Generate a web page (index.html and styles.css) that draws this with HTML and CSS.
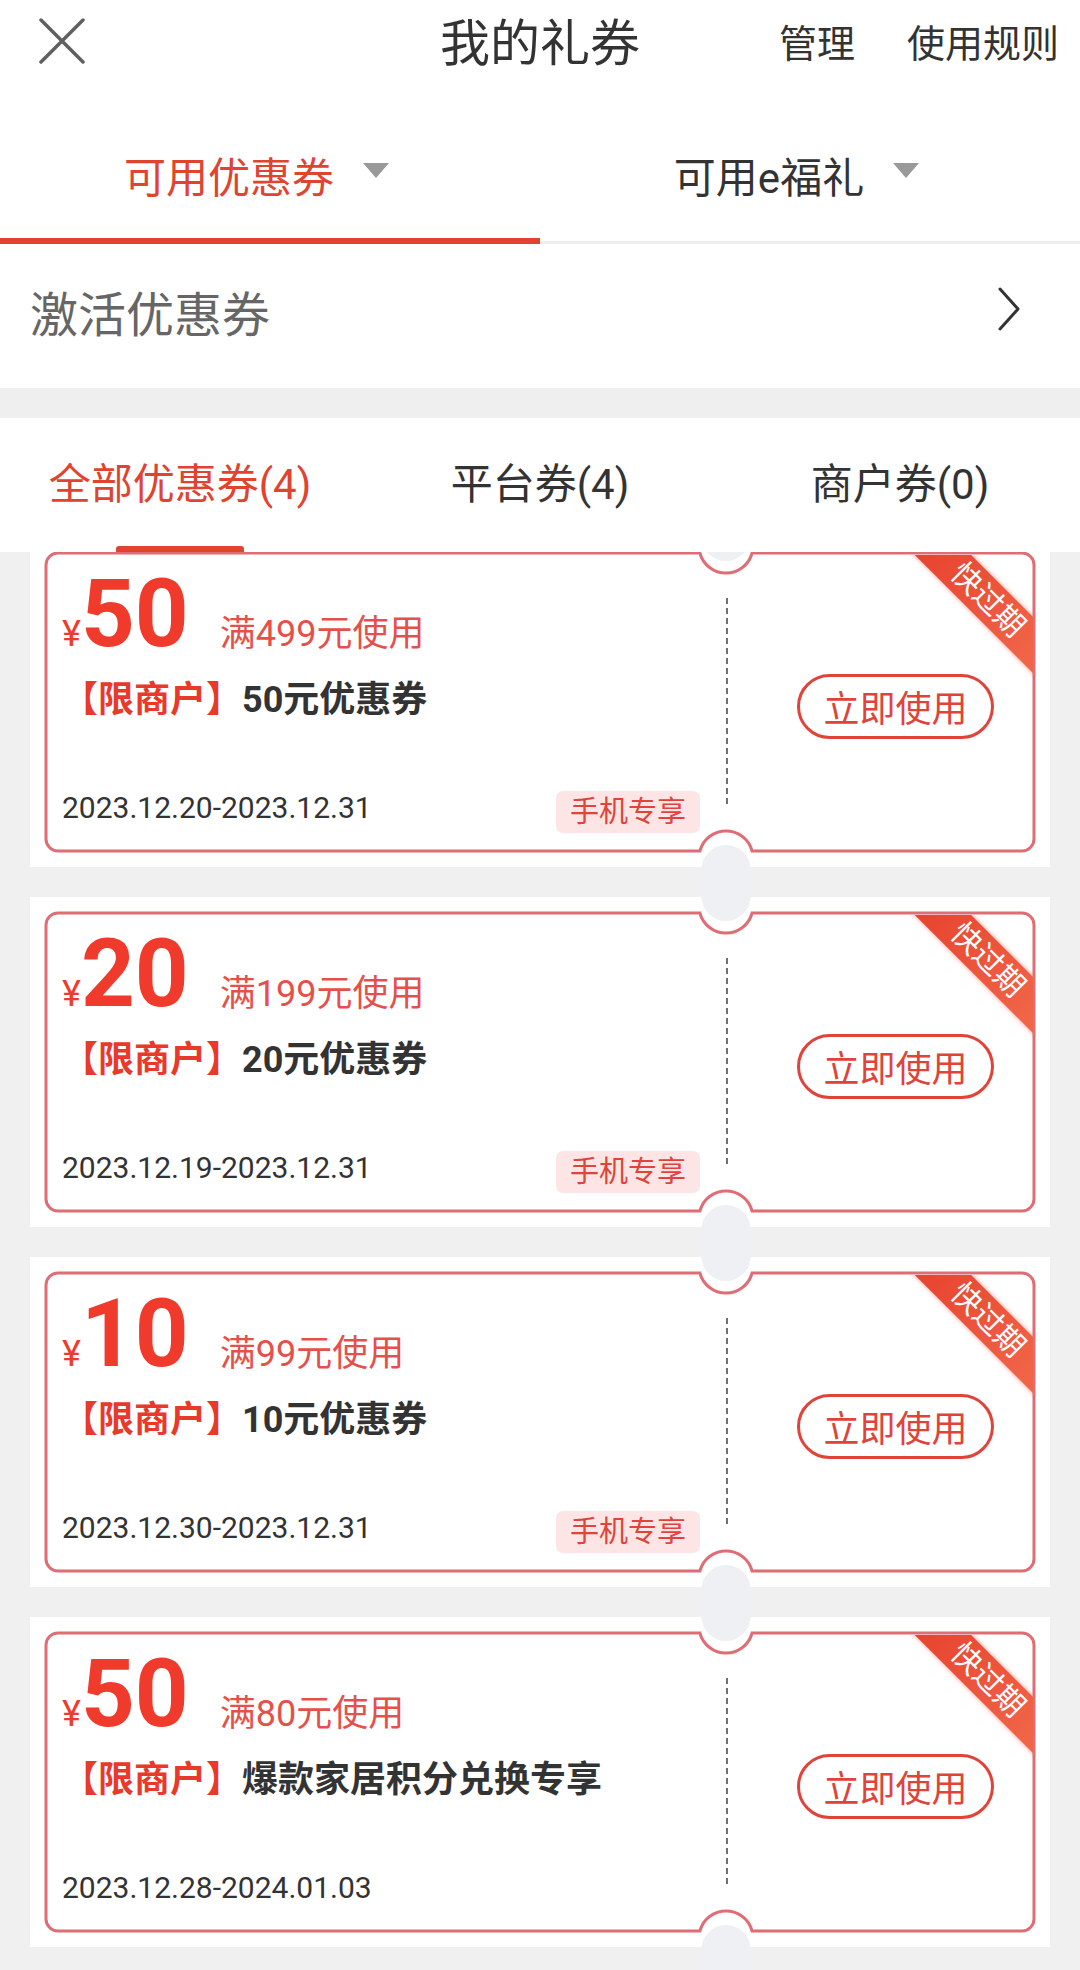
FILE: index.html
```html
<!DOCTYPE html>
<html lang="zh-CN">
<head>
<meta charset="utf-8">
<title>我的礼券</title>
<link rel="stylesheet" href="styles.css">
</head>
<body>
<div class="page">
  <header class="topbar">
    <div class="close">
      <svg width="46" height="46" viewBox="0 0 46 46"><path d="M2 2 L44 44 M44 2 L2 44" stroke="#606060" stroke-width="3.5" stroke-linecap="round" fill="none"/></svg>
    </div>
    <div class="title">我的礼券</div>
    <div class="actions"><span>管理</span><span>使用规则</span></div>
  </header>

  <nav class="tabs">
    <div class="tab active"><span>可用优惠券</span><i class="caret"></i></div>
    <div class="tab"><span>可用e福礼</span><i class="caret"></i></div>
  </nav>

  <div class="activate">
    <span>激活优惠券</span>
    <svg class="chev" width="22" height="44" viewBox="0 0 22 44"><path d="M2 2 L20 22 L2 42" stroke="#333" stroke-width="3" fill="none" stroke-linecap="round" stroke-linejoin="round"/></svg>
  </div>

  <div class="band"></div>

  <nav class="subtabs">
    <div class="subtab active">全部优惠券(4)</div>
    <div class="subtab">平台券(4)</div>
    <div class="subtab">商户券(0)</div>
  </nav>

  <div class="list">
    <div class="coupon">
      <svg class="shape" width="1020" height="330" viewBox="0 0 1020 330">
        <rect x="671.5" y="-60" width="49" height="84" rx="24.5" fill="#eef0f3"/>
        <rect x="671.5" y="308" width="49" height="84" rx="24.5" fill="#eef0f3"/>
        <path d="M28 16 H669.9 A27 27 0 0 0 722.1 16 H992 A12 12 0 0 1 1004 28 V302 A12 12 0 0 1 992 314 H722.1 A27 27 0 0 0 669.9 314 H28 A12 12 0 0 1 16 302 V28 A12 12 0 0 1 28 16 Z" fill="#fff" stroke="#de6d75" stroke-width="3"/>
      </svg>
      <div class="card">
        <div class="card-left">
          <div class="amount"><span class="yen">¥</span><span class="num">50</span><span class="cond">满499元使用</span></div>
          <div class="name"><span class="limit">【限商户】</span>50元优惠券</div>
          <div class="foot"><span class="date">2023.12.20-2023.12.31</span><span class="tag">手机专享</span></div>
        </div>
        <div class="divider"></div>
        <div class="card-right"><div class="use">立即使用</div></div>
        <div class="ribbon"><div class="ribbon-band">快过期</div></div>
      </div>
    </div>

    <div class="coupon">
      <svg class="shape" width="1020" height="330" viewBox="0 0 1020 330">
        <rect x="671.5" y="-60" width="49" height="84" rx="24.5" fill="#eef0f3"/>
        <rect x="671.5" y="308" width="49" height="84" rx="24.5" fill="#eef0f3"/>
        <path d="M28 16 H669.9 A27 27 0 0 0 722.1 16 H992 A12 12 0 0 1 1004 28 V302 A12 12 0 0 1 992 314 H722.1 A27 27 0 0 0 669.9 314 H28 A12 12 0 0 1 16 302 V28 A12 12 0 0 1 28 16 Z" fill="#fff" stroke="#de6d75" stroke-width="3"/>
      </svg>
      <div class="card">
        <div class="card-left">
          <div class="amount"><span class="yen">¥</span><span class="num">20</span><span class="cond">满199元使用</span></div>
          <div class="name"><span class="limit">【限商户】</span>20元优惠券</div>
          <div class="foot"><span class="date">2023.12.19-2023.12.31</span><span class="tag">手机专享</span></div>
        </div>
        <div class="divider"></div>
        <div class="card-right"><div class="use">立即使用</div></div>
        <div class="ribbon"><div class="ribbon-band">快过期</div></div>
      </div>
    </div>

    <div class="coupon">
      <svg class="shape" width="1020" height="330" viewBox="0 0 1020 330">
        <rect x="671.5" y="-60" width="49" height="84" rx="24.5" fill="#eef0f3"/>
        <rect x="671.5" y="308" width="49" height="84" rx="24.5" fill="#eef0f3"/>
        <path d="M28 16 H669.9 A27 27 0 0 0 722.1 16 H992 A12 12 0 0 1 1004 28 V302 A12 12 0 0 1 992 314 H722.1 A27 27 0 0 0 669.9 314 H28 A12 12 0 0 1 16 302 V28 A12 12 0 0 1 28 16 Z" fill="#fff" stroke="#de6d75" stroke-width="3"/>
      </svg>
      <div class="card">
        <div class="card-left">
          <div class="amount"><span class="yen">¥</span><span class="num">10</span><span class="cond">满99元使用</span></div>
          <div class="name"><span class="limit">【限商户】</span>10元优惠券</div>
          <div class="foot"><span class="date">2023.12.30-2023.12.31</span><span class="tag">手机专享</span></div>
        </div>
        <div class="divider"></div>
        <div class="card-right"><div class="use">立即使用</div></div>
        <div class="ribbon"><div class="ribbon-band">快过期</div></div>
      </div>
    </div>

    <div class="coupon">
      <svg class="shape" width="1020" height="330" viewBox="0 0 1020 330">
        <rect x="671.5" y="-60" width="49" height="84" rx="24.5" fill="#eef0f3"/>
        <rect x="671.5" y="308" width="49" height="84" rx="24.5" fill="#eef0f3"/>
        <path d="M28 16 H669.9 A27 27 0 0 0 722.1 16 H992 A12 12 0 0 1 1004 28 V302 A12 12 0 0 1 992 314 H722.1 A27 27 0 0 0 669.9 314 H28 A12 12 0 0 1 16 302 V28 A12 12 0 0 1 28 16 Z" fill="#fff" stroke="#de6d75" stroke-width="3"/>
      </svg>
      <div class="card">
        <div class="card-left">
          <div class="amount"><span class="yen">¥</span><span class="num">50</span><span class="cond">满80元使用</span></div>
          <div class="name"><span class="limit">【限商户】</span>爆款家居积分兑换专享</div>
          <div class="foot"><span class="date">2023.12.28-2024.01.03</span></div>
        </div>
        <div class="divider"></div>
        <div class="card-right"><div class="use">立即使用</div></div>
        <div class="ribbon"><div class="ribbon-band">快过期</div></div>
      </div>
    </div>
  </div>
</div>
</body>
</html>
```

FILE: styles.css
```css
* { box-sizing: border-box; margin: 0; padding: 0; }
html, body { width: 1080px; height: 1970px; overflow: hidden; background: #fff; }
body {
  font-family: "Roboto", "Noto Sans CJK SC", sans-serif;
  color: #333;
}
.page { width: 1080px; height: 1970px; display: flex; flex-direction: column; }

/* top bar */
.topbar {
  height: 88px;
  display: grid;
  grid-template-columns: 1fr auto 1fr;
  align-items: center;
  padding: 0 21px;
}
.close { display: flex; align-items: center; margin-top: -6px; margin-left: 18px; }
.title { font-size: 50px; line-height: 60px; color: #333; }
.actions { justify-self: end; display: flex; gap: 52px; font-size: 38px; line-height: 50px; color: #333; }

/* primary tabs */
.tabs {
  display: flex;
  border-bottom: 3px solid #eeeeee;
  height: 156px;
}
.tab {
  flex: 1;
  position: relative;
  display: flex;
  align-items: center;
  justify-content: center;
  padding-top: 29px;
  padding-right: 27px;
  font-size: 42px;
  line-height: 56px;
  color: #333;
}
.tab.active { color: #e0432f; }
.tab.active::after {
  content: "";
  position: absolute;
  left: 0; right: 0; bottom: -3px;
  height: 6px;
  background: #e0432f;
}
.caret {
  width: 0; height: 0;
  border-left: 13.5px solid transparent;
  border-right: 13.5px solid transparent;
  border-top: 15px solid #999;
  margin-left: 29px;
  margin-bottom: 17px;
}

/* activate row */
.activate {
  height: 144px;
  display: flex;
  align-items: center;
  justify-content: space-between;
  padding: 0 60px 0 30px;
  font-size: 48px;
  line-height: 60px;
  color: #666;
}
.chev { margin-bottom: 15px; }

.band { height: 30px; background: #efefef; }

/* sub tabs */
.subtabs {
  height: 134px;
  display: grid;
  grid-template-columns: repeat(3, 1fr);
  align-items: center;
  font-size: 42px;
  line-height: 56px;
  color: #333;
}
.subtab { position: relative; text-align: center; height: 100%; display: flex; align-items: center; justify-content: center; }
.subtab.active { color: #e0432f; }
.subtab.active::after {
  content: "";
  position: absolute;
  bottom: 0; left: 50%;
  width: 128px; height: 6px;
  margin-left: -64px;
  border-radius: 3px 3px 0 0;
  background: #e0432f;
}

/* list */
.list {
  flex: 1;
  overflow: hidden;
  padding: 0 30px;
  background: linear-gradient(90deg, #f0f0f0 0, #f0f0f0 702px, #eef0f3 702px, #eef0f3 751px, #f0f0f0 751px);
}
.coupon {
  position: relative;
  height: 330px;
  background: #fff;
  padding: 16px;
  margin-bottom: 30px;
  overflow: hidden;
}
.coupon:first-child { margin-top: -15px; }
.shape { position: absolute; left: 0; top: 0; }
.card {
  position: relative;
  height: 298px;
  display: flex;
}
.card-left {
  width: 680px;
  display: flex;
  flex-direction: column;
  padding: 14px 0 18px 16px;
}
.amount {
  display: flex;
  align-items: baseline;
  height: 94px;
  line-height: 94px;
}
.yen { font-size: 36px; color: #ef3b2d; }
.num { font-size: 94px; font-weight: 700; color: #f03a2c; letter-spacing: 0; }
.cond { font-size: 36px; color: #e6504a; margin-left: 31px; }
.name {
  margin-top: 14px;
  font-size: 36px;
  line-height: 50px;
  font-weight: 700;
  color: #333;
}
.limit { color: #e8392a; }
.foot {
  margin-top: auto;
  display: flex;
  align-items: center;
  justify-content: space-between;
  min-height: 42px;
  padding-right: 26px;
}
.date { font-size: 30px; line-height: 34px; color: #333; margin-bottom: 8px; }
.tag {
  height: 42px;
  padding: 0 14px;
  font-size: 29px;
  line-height: 42px;
  color: #e0433a;
  background: #fde5e5;
  border-radius: 7px;
}
.divider {
  width: 2px;
  height: 206px;
  margin-top: 45px;
  background: repeating-linear-gradient(180deg, #707070 0, #707070 6px, transparent 6px, transparent 10px);
}
.card-right {
  flex: 1;
  display: flex;
  align-items: center;
  padding-left: 69px;
  padding-top: 8px;
}
.use {
  width: 197px;
  height: 65px;
  border: 3px solid #e0433a;
  border-radius: 33px;
  display: flex;
  align-items: center;
  justify-content: center;
  font-size: 36px;
  color: #e0433a;
}
.ribbon {
  position: absolute;
  top: 1.5px; right: 1.5px;
  width: 125px; height: 125px;
  overflow: hidden;
  border-top-right-radius: 11px;
}
.ribbon-band {
  position: absolute;
  left: -20px; top: 25.5px;
  width: 200px; height: 40px;
  transform: rotate(45deg);
  background: linear-gradient(90deg, #e6402c, #f26b4d);
  box-shadow: 0 0 5px rgba(236, 80, 60, 0.55);
  color: #fff;
  font-size: 30px;
  line-height: 40px;
  text-align: center;
}
```
